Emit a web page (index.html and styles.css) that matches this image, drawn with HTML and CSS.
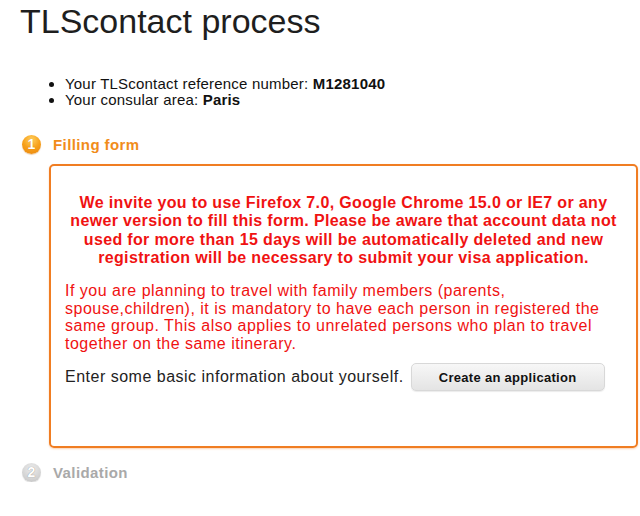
FILE: index.html
```html
<!DOCTYPE html>
<html>
<head>
<meta charset="utf-8">
<link rel="stylesheet" href="styles.css">
</head>
<body>
<h1 class="title">TLScontact process</h1>
<ul class="info">
  <li>Your TLScontact reference number: <b>M1281040</b></li>
  <li>Your consular area: <b>Paris</b></li>
</ul>
<div class="step step-active">
  <span class="num num-active">1</span>
  <span class="step-label">Filling form</span>
</div>
<div class="panel">
  <p class="warn">We invite you to use Firefox 7.0, Google Chrome 15.0 or IE7 or any newer version to fill this form. Please be aware that account data not used for more than 15 days will be automatically deleted and new registration will be necessary to submit your visa application.</p>
  <p class="note">If you are planning to travel with family members (parents, spouse,children), it is mandatory to have each person in registered the same group. This also applies to unrelated persons who plan to travel together on the same itinerary.</p>
  <div class="action">
    <span>Enter some basic information about yourself.</span>
    <button class="btn">Create an application</button>
  </div>
</div>
<div class="step step-off">
  <span class="num num-off">2</span>
  <span class="step-label">Validation</span>
</div>
</body>
</html>
```
FILE: styles.css
```css
html, body {
  margin: 0;
  padding: 0;
  background: #fff;
}
body {
  font-family: "Liberation Sans", Arial, Helvetica, sans-serif;
  color: #222;
  width: 640px;
  overflow: hidden;
}
.title {
  margin: 0;
  padding: 2px 0 0 20px;
  font-size: 34px;
  font-weight: normal;
  line-height: 38px;
  color: #1e1e1e;
}
.info {
  margin: 36px 0 0 0;
  padding: 0 0 0 65px;
  font-size: 15px;
  line-height: 16px;
  letter-spacing: 0.2px;
  color: #111;
}
.step {
  display: flex;
  align-items: center;
  margin: 26px 0 0 22px;
  height: 20px;
}
.num {
  width: 19px;
  height: 19px;
  border-radius: 50%;
  display: flex;
  align-items: center;
  justify-content: center;
  color: #fff;
  font-weight: bold;
  font-size: 14px;
  margin-right: 12px;
}
.num-active {
  background: radial-gradient(circle at 50% 25%, #ffd060 0%, #f7a01a 50%, #e8840c 100%);
  box-shadow: 0 1px 1px rgba(200,110,0,0.35);
  text-shadow: 0 0 1px rgba(170,90,0,0.6);
}
.num-off {
  background: radial-gradient(circle at 50% 30%, #ececec 0%, #d2d2d2 65%, #bdbdbd 100%);
  box-shadow: 0 1px 1px rgba(0,0,0,0.12);
  text-shadow: 0 0 1px #7a7a7a;
}
.step-label {
  font-size: 15px;
  font-weight: bold;
  letter-spacing: 0.4px;
}
.step-active .step-label {
  color: #f18c1a;
}
.step-off .step-label {
  color: #a9a9a9;
}
.step-off {
  margin-top: 14px;
}
.panel {
  margin: 10px 0 0 49px;
  width: 557px;
  height: 280px;
  border: 2px solid #f07d22;
  border-radius: 5px;
  padding: 0 14px;
  box-sizing: content-box;
  box-shadow: 0 1px 2px rgba(240,125,34,0.35);
}
.warn {
  margin: 28px 0 0 0;
  text-align: center;
  color: #f01212;
  font-weight: bold;
  font-size: 16px;
  line-height: 18.3px;
  letter-spacing: 0.35px;
}
.note {
  margin: 15px 0 0 0;
  color: #f01212;
  font-size: 16px;
  line-height: 17.5px;
  letter-spacing: 0.5px;
}
.action {
  display: flex;
  align-items: center;
  margin-top: 11px;
  font-size: 16px;
  letter-spacing: 0.5px;
  color: #222;
}
.btn {
  margin-left: 7px;
  width: 194px;
  height: 28px;
  border: 1px solid #d8d8d8;
  border-radius: 5px;
  background: linear-gradient(#f7f7f7, #e4e4e4);
  box-shadow: 0 1px 1px rgba(0,0,0,0.08);
  font-family: "Liberation Sans", Arial, sans-serif;
  font-weight: bold;
  font-size: 13px;
  letter-spacing: 0.3px;
  color: #111;
  padding: 0;
}
```
